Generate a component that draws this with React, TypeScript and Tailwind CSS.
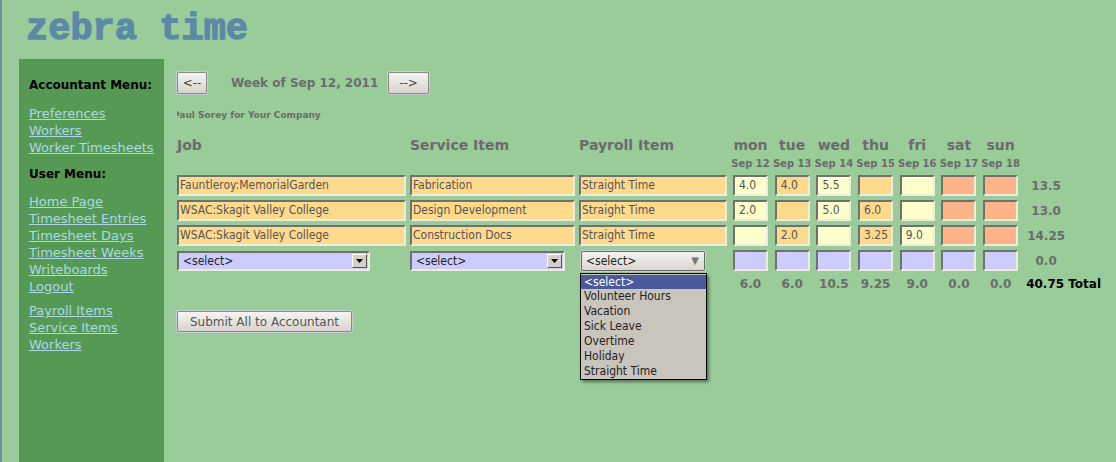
import React from "react";

const inset =
  "border-2 border-t-[#707070] border-l-[#707070] border-b-[#eeecdc] border-r-[#eeecdc]";
const cond = "font-['DejaVu_Sans_Condensed','DejaVu_Sans',sans-serif] font-stretch-condensed";

const OR = "bg-[#ffd98c]";
const LY = "bg-[#ffffcc]";
const SA = "bg-[#ffb388]";
const BL = "bg-[#ccccff]";

const days = [
  { d: "mon", date: "Sep 12", tot: "6.0" },
  { d: "tue", date: "Sep 13", tot: "6.0" },
  { d: "wed", date: "Sep 14", tot: "10.5" },
  { d: "thu", date: "Sep 15", tot: "9.25" },
  { d: "fri", date: "Sep 16", tot: "9.0" },
  { d: "sat", date: "Sep 17", tot: "0.0" },
  { d: "sun", date: "Sep 18", tot: "0.0" },
];
const dayBg = [LY, OR, LY, OR, LY, SA, SA];

const rows = [
  { job: "Fauntleroy:MemorialGarden", svc: "Fabrication", pay: "Straight Time", hrs: ["4.0", "4.0", "5.5", "", "", "", ""], tot: "13.5" },
  { job: "WSAC:Skagit Valley College", svc: "Design Development", pay: "Straight Time", hrs: ["2.0", "", "5.0", "6.0", "", "", ""], tot: "13.0" },
  { job: "WSAC:Skagit Valley College", svc: "Construction Docs", pay: "Straight Time", hrs: ["", "2.0", "", "3.25", "9.0", "", ""], tot: "14.25" },
];

const payrollOptions = ["Volunteer Hours", "Vacation", "Sick Leave", "Overtime", "Holiday", "Straight Time"];

function Field({ w, bg, text }: { w: string; bg: string; text: string }) {
  return (
    <div className={`${w} ${bg} ${inset} ${cond} h-[21px] pl-[1px] text-[12px] leading-[17px] text-[#555] whitespace-nowrap overflow-hidden`}>
      {text}
    </div>
  );
}

function DayCell({ bg, text }: { bg: string; text: string }) {
  return (
    <div className={`w-[35px] ${bg} ${inset} ${cond} h-[21px] pl-[4px] text-[12px] leading-[17px] text-[#555]`}>
      {text}
    </div>
  );
}

function ComboSelect({ w }: { w: string }) {
  return (
    <div className={`${w} ${BL} ${inset} h-[20px] flex items-center justify-between pl-[4px] pr-[1px]`}>
      <span className={`${cond} text-[12px] text-[#222]`}>&lt;select&gt;</span>
      <div className="w-[15px] h-[14px] bg-[#d4d0c8] border border-t-[#fff] border-l-[#fff] border-b-[#555] border-r-[#555] flex items-center justify-center">
        <svg width="7" height="4" viewBox="0 0 7 4">
          <path d="M0 0h7L3.5 4z" fill="#000" />
        </svg>
      </div>
    </div>
  );
}

function NavButton({ label, w }: { label: string; w: string }) {
  return (
    <div className={`${w} h-[22px] rounded-[2px] border border-[#8a8a8a] bg-gradient-to-b from-[#f6f5f2] to-[#d8d4cc] shadow-[0_0_0_1px_#c4ccd4] flex items-center justify-center text-[12px] text-[#444] font-['DejaVu_Sans',sans-serif]`}>
      {label}
    </div>
  );
}

export default function App() {
  return (
    <div className="min-h-screen h-[462px] overflow-hidden bg-[#99cc99] border-l-2 border-[#71909c] font-['DejaVu_Sans',sans-serif]">
      <h1 className="h-[59px] pl-[24px] pt-[9px] font-['Liberation_Mono',monospace] font-bold text-[37px] leading-[40px] text-[#5b89a6] [-webkit-text-stroke:1.3px_#5b89a6]">
        zebra time
      </h1>
      <div className="flex ml-[17px]">
        {/* sidebar */}
        <aside className="w-[145px] h-[403px] bg-[#559955] pl-[10px] pt-[18px] text-[13px] leading-[17px]">
          <div className="font-bold text-black text-[12px]">Accountant Menu:</div>
          <div className="mt-[11px] flex flex-col text-[#add8e6] underline">
            <a>Preferences</a>
            <a>Workers</a>
            <a>Worker Timesheets</a>
          </div>
          <div className="mt-[10px] font-bold text-black text-[12px]">User Menu:</div>
          <div className="mt-[10px] flex flex-col text-[#add8e6] underline">
            <a>Home Page</a>
            <a>Timesheet Entries</a>
            <a>Timesheet Days</a>
            <a>Timesheet Weeks</a>
            <a>Writeboards</a>
            <a>Logout</a>
          </div>
          <div className="mt-[7px] flex flex-col text-[#add8e6] underline">
            <a>Payroll Items</a>
            <a>Service Items</a>
            <a>Workers</a>
          </div>
        </aside>

        {/* main */}
        <main className="ml-[13px] pt-[13px] text-[#6b6b6b]">
          <div className="flex items-center h-[22px]">
            <NavButton label="<--" w="w-[30px]" />
            <div className="ml-[24px] w-[157px] font-bold text-[12px]">Week of Sep 12, 2011</div>
            <NavButton label="-->" w="w-[41px]" />
          </div>
          <div className="mt-[15px] h-[13px] overflow-hidden">
            <span className="-ml-[4px] block font-bold text-[9px] leading-[13px] whitespace-nowrap">Paul Sorey for Your Company</span>
          </div>

          {/* headers */}
          <div className="mt-[15px] flex items-end font-bold text-[14px] leading-[17px]">
            <div className="w-[229px]">Job</div>
            <div className="ml-[4px] w-[165px]">Service Item</div>
            <div className="ml-[4px] w-[148px]">Payroll Item</div>
            <div className="ml-[6px] flex gap-[6.7px]">
              {days.map((d) => (
                <div key={d.d} className="w-[35px] text-center">{d.d}</div>
              ))}
            </div>
          </div>
          <div className="mt-[4px] flex font-bold text-[10px] leading-[12px]">
            <div className="w-[556px]" />
            <div className="flex gap-[6.7px]">
              {days.map((d) => (
                <div key={d.date} className="w-[35px] flex justify-center whitespace-nowrap">{d.date}</div>
              ))}
            </div>
          </div>

          {/* entry rows */}
          <div className="mt-[5px] flex flex-col gap-[4px]">
            {rows.map((r, i) => (
              <div key={i} className="flex items-center">
                <Field w="w-[229px]" bg={OR} text={r.job} />
                <div className="ml-[4px]"><Field w="w-[165px]" bg={OR} text={r.svc} /></div>
                <div className="ml-[4px]"><Field w="w-[148px]" bg={OR} text={r.pay} /></div>
                <div className="ml-[6px] flex gap-[6.7px]">
                  {r.hrs.map((h, j) => (
                    <DayCell key={j} bg={dayBg[j]} text={h} />
                  ))}
                </div>
                <div className="ml-[9px] w-[38px] text-center font-bold text-[12px]">{r.tot}</div>
              </div>
            ))}

            {/* new entry row */}
            <div className="flex items-center h-[21px]">
              <div className="w-[229px]"><ComboSelect w="w-[193px]" /></div>
              <div className="ml-[4px] w-[165px]"><ComboSelect w="w-[155px]" /></div>
              <div className="ml-[4px] w-[148px] pl-[2px] relative">
                <div className="w-[124px] h-[20px] rounded-[2px] border border-[#6a6a6a] bg-gradient-to-b from-[#f4f3f0] to-[#dad6ce] shadow-[0_0_0_1px_#c8d0d6] flex items-center justify-between pl-[4px] pr-[5px]">
                  <span className={`${cond} text-[12px] text-[#222]`}>&lt;select&gt;</span>
                  <span className="text-[10px] text-[#777]">▼</span>
                </div>
                <div className={`absolute left-[1px] top-[22px] w-[127px] h-[107px] bg-[#c9c5bd] border border-black shadow-[2px_2px_3px_rgba(0,0,0,0.45)] ${cond} text-[12px] leading-[15px] text-[#222] z-10`}>
                  <div className="bg-[#4a5a9c] text-white pl-[3px] mt-[1px] h-[14px] leading-[14px]">&lt;select&gt;</div>
                  {payrollOptions.map((o) => (
                    <div key={o} className="pl-[3px]">{o}</div>
                  ))}
                </div>
              </div>
              <div className="ml-[6px] flex gap-[6.7px]">
                {days.map((d) => (
                  <DayCell key={d.d} bg={BL} text="" />
                ))}
              </div>
              <div className="ml-[9px] w-[38px] text-center font-bold text-[12px]">0.0</div>
            </div>
          </div>

          {/* totals */}
          <div className="mt-[5px] flex font-bold text-[12px] leading-[16px]">
            <div className="w-[556px]" />
            <div className="flex gap-[6.7px]">
              {days.map((d) => (
                <div key={d.d} className="w-[35px] text-center">{d.tot}</div>
              ))}
            </div>
            <div className="ml-[8px] whitespace-nowrap text-black">40.75 Total</div>
          </div>

          <div className="mt-[19px] w-[175px] h-[21px] rounded-[2px] border border-[#8a8a8a] bg-gradient-to-b from-[#f6f5f2] to-[#d8d4cc] shadow-[0_0_0_1px_#c4ccd4] flex items-center justify-center text-[12px] text-[#555]">
            Submit All to Accountant
          </div>
        </main>
      </div>
    </div>
  );
}
